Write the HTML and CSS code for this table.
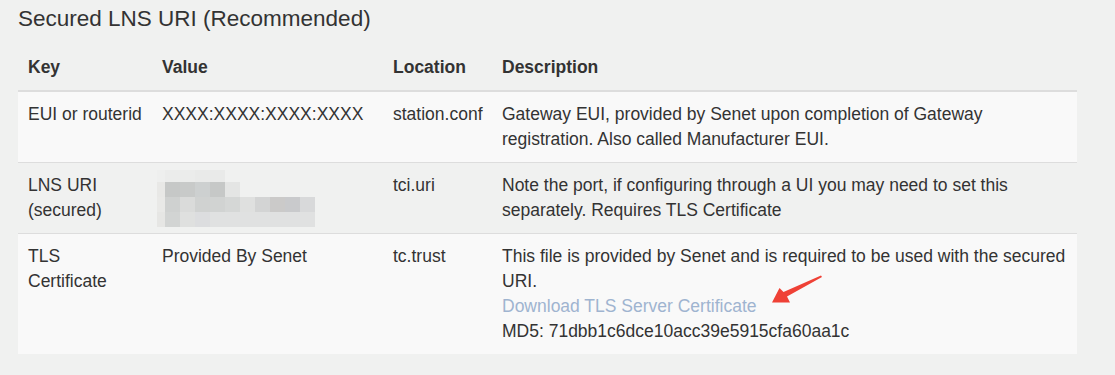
FILE: index.html
```html
<!DOCTYPE html>
<html lang="en">
<head>
    <meta charset="UTF-8">
    <meta name="viewport" content="width=device-width, initial-scale=1.0">
    <title>Secured LNS URI</title>
    <link rel="stylesheet" href="styles.css">
</head>
<body>
    <div class="section">
        <h4 class="section-title">Secured LNS URI (Recommended)</h4>
        <table class="config-table">
            <thead>
                <tr>
                    <th class="col-key">Key</th>
                    <th class="col-value">Value</th>
                    <th class="col-location">Location</th>
                    <th>Description</th>
                </tr>
            </thead>
            <tbody>
                <tr>
                    <td>EUI or routerid</td>
                    <td>XXXX:XXXX:XXXX:XXXX</td>
                    <td>station.conf</td>
                    <td>Gateway EUI, provided by Senet upon completion of Gateway registration. Also called Manufacturer EUI.</td>
                </tr>
                <tr>
                    <td>LNS URI (secured)</td>
                    <td>
                        <!-- blurred value in the screenshot -->
                        <svg class="masked" width="158" height="57" viewBox="0 0 158 57">
                            <rect x="0" y="0" width="8" height="12" fill="#eeefee"/>
                            <rect x="8" y="0" width="30" height="12" fill="#ebeceb"/>
                            <rect x="38" y="0" width="30" height="12" fill="#e9eae9"/>

                            <rect x="0" y="12" width="8" height="15" fill="#e8e8e6"/>
                            <rect x="8" y="12" width="15" height="15" fill="#c6c8c7"/>
                            <rect x="23" y="12" width="15" height="15" fill="#c8cac9"/>
                            <rect x="38" y="12" width="15" height="15" fill="#cdd0d0"/>
                            <rect x="53" y="12" width="15" height="15" fill="#c6c8c7"/>
                            <rect x="68" y="12" width="15" height="15" fill="#e4e5e4"/>

                            <rect x="0" y="27" width="8" height="15" fill="#e9e9e7"/>
                            <rect x="8" y="27" width="15" height="15" fill="#cfd1d0"/>
                            <rect x="23" y="27" width="15" height="15" fill="#dadbda"/>
                            <rect x="38" y="27" width="15" height="15" fill="#d0d2d1"/>
                            <rect x="53" y="27" width="15" height="15" fill="#d1d3d2"/>
                            <rect x="68" y="27" width="15" height="15" fill="#d5d7d6"/>
                            <rect x="83" y="27" width="15" height="15" fill="#dfe0df"/>
                            <rect x="98" y="27" width="15" height="15" fill="#d3d4d4"/>
                            <rect x="113" y="27" width="15" height="15" fill="#cbcac9"/>
                            <rect x="128" y="27" width="15" height="15" fill="#c9cacc"/>
                            <rect x="143" y="27" width="15" height="15" fill="#d8d9da"/>

                            <rect x="0" y="42" width="8" height="15" fill="#e6e6e4"/>
                            <rect x="8" y="42" width="15" height="15" fill="#d2d4d3"/>
                            <rect x="23" y="42" width="15" height="15" fill="#dfe0df"/>
                            <rect x="38" y="42" width="15" height="15" fill="#dcdddf"/>
                            <rect x="53" y="42" width="105" height="15" fill="#e0e1e1"/>
                        </svg>
                    </td>
                    <td>tci.uri</td>
                    <td>Note the port, if configuring through a UI you may need to set this separately. Requires TLS Certificate</td>
                </tr>
                <tr>
                    <td>TLS Certificate</td>
                    <td>Provided By Senet</td>
                    <td>tc.trust</td>
                    <td class="desc-cell">
                        This file is provided by Senet and is required to be used with the secured URI.<br>
                        <a class="cert-link" href="#">Download TLS Server Certificate</a><br>
                        MD5: 71dbb1c6dce10acc39e5915cfa60aa1c
                        <!-- red annotation arrow -->
                        <svg class="annotation" width="54" height="32" viewBox="0 0 54 32">
                            <polygon points="2,28.5 9.5,14 13.5,18 51,1.5 52,3 17,22.5 20,28.5" fill="#ef4136"/>
                        </svg>
                    </td>
                </tr>
            </tbody>
        </table>
    </div>
</body>
</html>
```

FILE: styles.css
```css
body {
    font-family: 'Liberation Sans', Arial, Helvetica, sans-serif;
    font-size: 17.5px;
    line-height: 25px;
    color: #333;
    background-color: #f0f1f0;
    margin: 0;
    padding: 7px 38px 0 18px;
}

.section-title {
    font-size: 22.5px;
    font-weight: normal;
    line-height: 1.1;
    margin: 0 0 13px 0;
    color: #333;
}

.config-table {
    width: 1059px;
    border-collapse: collapse;
    table-layout: fixed;
}

.config-table th,
.config-table td {
    box-sizing: border-box;
    padding: 10px;
    text-align: left;
    vertical-align: top;
}

.config-table th {
    font-weight: bold;
    vertical-align: bottom;
    border-bottom: 2px solid #ddd;
}

.config-table td {
    border-top: 1px solid #ddd;
}

.config-table tbody tr:nth-child(odd) {
    background-color: #f9f9f9;
}

.col-key {
    width: 134px;
}

.col-value {
    width: 231px;
}

.col-location {
    width: 109px;
}

.masked {
    display: block;
    margin: -3px 0 -4px -5px;
}

.cert-link {
    color: #9fb4d0;
    text-decoration: none;
}

.desc-cell {
    position: relative;
}

.annotation {
    position: absolute;
    left: 278px;
    top: 40px;
}
```
